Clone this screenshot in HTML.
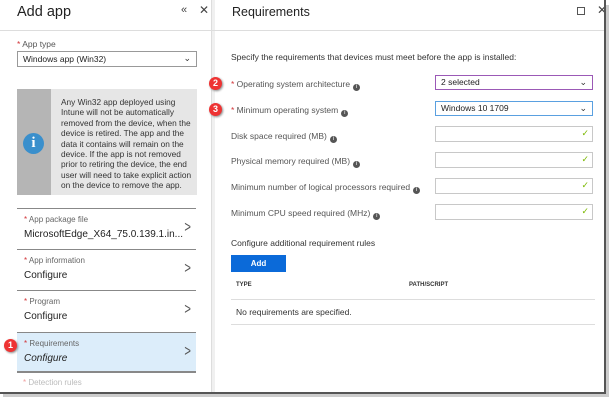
<!DOCTYPE html>
<html><head><style>
*{margin:0;padding:0;box-sizing:border-box}
body{width:615px;height:405px;background:#fff;font-family:"Liberation Sans",sans-serif;position:relative;overflow:hidden;color:#333}
.a{position:absolute;white-space:nowrap}
.s{font-size:8.5px;color:#555}
.st{color:#d13438}
.sel{position:absolute;border:1px solid #999;background:#fff;font-size:8.5px;color:#222;padding:2px 5px}
.chev{position:absolute;right:5px;top:1px;font-size:9px;color:#333}
.inp{position:absolute;left:435px;width:158px;height:16px;border:1px solid #c8c8c8;background:#fff}
.inp:after{content:"✓";position:absolute;right:3px;top:1px;font-size:9px;color:#7ab800}
.i{display:inline-block;width:7px;height:7px;border-radius:50%;background:#555;color:#fff;font-size:6px;text-align:center;line-height:7px;margin-left:3px;vertical-align:-1px}
.row{position:absolute;left:17px;width:179px;height:41px;border-top:1px solid #888}
.row .l{position:absolute;left:7px;top:6px;font-size:8px;color:#666}
.row .v{position:absolute;left:7px;top:20px;font-size:10px;color:#222}
.row .g{position:absolute;right:4px;top:10px;font-size:16px;color:#555;transform:scaleX(.7)}
.bad{position:absolute;width:13px;height:13px;border-radius:50%;background:#e33;color:#fff;font-size:9px;font-weight:bold;text-align:center;line-height:13px;box-shadow:1px 1px 2px #888}
</style></head><body>
<div class="a" style="left:0;top:0;width:212px;height:393px;border-right:1px solid #ddd"></div>
<div class="a" style="left:212px;top:0;width:3px;height:393px;background:#f0f0f0"></div>
<div class="a" style="left:0;top:30px;width:605px;border-top:1px solid #ddd"></div>
<div class="a" style="left:17px;top:4px;font-size:14.5px;color:#222">Add app</div>
<div class="a" style="left:181px;top:4px;font-size:11px;color:#444">«</div>
<div class="a" style="left:199px;top:3px;font-size:12px;color:#444">✕</div>
<div class="a s" style="left:17px;top:39px"><span class="st">*</span> App type</div>
<div class="sel" style="left:17px;top:51px;width:180px;height:16px">Windows app (Win32)<span class="chev">⌄</span></div>
<div class="a" style="left:17px;top:89px;width:180px;height:106px;background:#e6e6e6"></div>
<div class="a" style="left:17px;top:89px;width:34px;height:106px;background:#b5b5b5"></div>
<div class="a" style="left:23px;top:133px;width:21px;height:21px;border-radius:50%;background:#3a8fcc;color:#fff;font:bold 15px 'Liberation Serif',serif;text-align:center;line-height:21px">i</div>
<div class="a" style="left:61px;top:97px;font-size:8.3px;line-height:10.4px;color:#333">Any Win32 app deployed using<br>Intune will not be automatically<br>removed from the device, when the<br>device is retired. The app and the<br>data it contains will remain on the<br>device. If the app is not removed<br>prior to retiring the device, the end<br>user will need to take explicit action<br>on the device to remove the app.</div>
<div class="row" style="top:208px"><span class="l"><span class="st">*</span> App package file</span><span class="v">MicrosoftEdge_X64_75.0.139.1.in...</span><span class="g">&gt;</span></div>
<div class="row" style="top:249px"><span class="l"><span class="st">*</span> App information</span><span class="v">Configure</span><span class="g">&gt;</span></div>
<div class="row" style="top:290px"><span class="l"><span class="st">*</span> Program</span><span class="v">Configure</span><span class="g">&gt;</span></div>
<div class="row" style="top:332px;background:#dcedfa;border-bottom:2px solid #888"><span class="l"><span class="st">*</span> Requirements</span><span class="v" style="font-style:italic">Configure</span><span class="g">&gt;</span></div>
<div class="a" style="left:23px;top:378px;font-size:8px;color:#bbb"><span style="color:#f0a0a0">*</span> Detection rules</div>
<div class="bad" style="left:4px;top:339px">1</div>
<div class="a" style="left:232px;top:5px;font-size:12.5px;color:#222">Requirements</div>
<div class="a" style="left:577px;top:7px;width:8px;height:8px;border:1px solid #555"></div>
<div class="a" style="left:597px;top:3px;font-size:12px;color:#444">✕</div>
<div class="a s" style="left:231px;top:52px;color:#333">Specify the requirements that devices must meet before the app is installed:</div>
<div class="bad" style="left:209px;top:77px">2</div>
<div class="bad" style="left:209px;top:103px">3</div>
<div class="a s" style="left:231px;top:79px"><span class="st">*</span> Operating system architecture<span class="i">i</span></div>
<div class="sel" style="left:435px;top:75px;width:158px;height:15px;border-color:#9b59b6;padding-top:1px">2 selected<span class="chev">⌄</span></div>
<div class="a s" style="left:231px;top:105px"><span class="st">*</span> Minimum operating system<span class="i">i</span></div>
<div class="sel" style="left:435px;top:101px;width:158px;height:15px;border-color:#5aa0e0;padding-top:1px">Windows 10 1709<span class="chev">⌄</span></div>
<div class="a s" style="left:231px;top:131px">Disk space required (MB)<span class="i">i</span></div>
<div class="inp" style="top:126px"></div>
<div class="a s" style="left:231px;top:156px">Physical memory required (MB)<span class="i">i</span></div>
<div class="inp" style="top:152px"></div>
<div class="a s" style="left:231px;top:182px">Minimum number of logical processors required<span class="i">i</span></div>
<div class="inp" style="top:178px"></div>
<div class="a s" style="left:231px;top:208px">Minimum CPU speed required (MHz)<span class="i">i</span></div>
<div class="inp" style="top:204px"></div>
<div class="a s" style="left:231px;top:238px;color:#333">Configure additional requirement rules</div>
<div class="a" style="left:231px;top:255px;width:55px;height:17px;background:#0b6ad9;color:#fff;font-size:8px;font-weight:bold;text-align:center;line-height:17px">Add</div>
<div class="a" style="left:236px;top:282px;font-size:6px;font-weight:bold;color:#333">TYPE</div>
<div class="a" style="left:409px;top:282px;font-size:6px;font-weight:bold;color:#333">PATH/SCRIPT</div>
<div class="a" style="left:231px;top:299px;width:364px;border-top:1px solid #ddd"></div>
<div class="a s" style="left:236px;top:307px;color:#333">No requirements are specified.</div>
<div class="a" style="left:231px;top:324px;width:364px;border-top:1px solid #ddd"></div>
<div class="a" style="left:604px;top:0;width:2px;height:393px;background:#555"></div>
<div class="a" style="left:0;top:392px;width:606px;height:2px;background:#555"></div>
<div class="a" style="left:606px;top:5px;width:3px;height:391px;background:#ccc"></div>
<div class="a" style="left:3px;top:394px;width:606px;height:3px;background:#ccc"></div>
</body></html>
